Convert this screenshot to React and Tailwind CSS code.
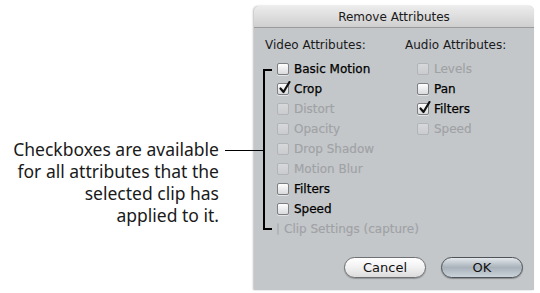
import { Fragment } from "react"

// attribute lists
const VIDEO_ATTRIBUTES = [
    { label: "Basic Motion", enabled: true, checked: false },
    { label: "Crop", enabled: true, checked: true },
    { label: "Distort", enabled: false },
    { label: "Opacity", enabled: false },
    { label: "Drop Shadow", enabled: false },
    { label: "Motion Blur", enabled: false },
    { label: "Filters", enabled: true, checked: false },
    { label: "Speed", enabled: true, checked: false },
    { label: "Clip Settings (capture)", enabled: false },
]

const AUDIO_ATTRIBUTES = [
    { label: "Levels", enabled: false },
    { label: "Pan", enabled: true, checked: false },
    { label: "Filters", enabled: true, checked: true },
    { label: "Speed", enabled: false },
]

const Checkbox = ({ enabled, checked }) => {
    return (
        <div
            className={
                enabled
                    ? "relative w-[12px] h-[12px] rounded-[2px] border border-[#7d7f82] bg-gradient-to-b from-white to-[#d9dadc] shadow-[0_1px_0_rgba(255,255,255,0.5)]"
                    : "relative w-[12px] h-[12px] rounded-[2px] border border-[#b2b5b8] bg-gradient-to-b from-[#d6d8da] to-[#c9cbce]"
            }
        >
            {checked && (
                <svg className="absolute left-[1px] top-[-3px]" width="12" height="13" viewBox="0 0 12 13">
                    <path d="M1.5 7.5 L4.5 11 L10.5 1" fill="none" stroke="#111" strokeWidth="2.2" strokeLinecap="round" strokeLinejoin="round" />
                </svg>
            )}
        </div>
    )
}

const AttributeRow = ({ item }) => {
    return (
        <div className="h-[20px] flex items-center gap-[5px] pl-[12px]">
            <Checkbox enabled={item.enabled} checked={item.checked} />
            <span className={item.enabled ? "text-[12px] text-black whitespace-nowrap [-webkit-text-stroke:0.25px_black]" : "text-[12px] text-[#9fa2a5] whitespace-nowrap [-webkit-text-stroke:0.15px_#9fa2a5]"}>
                {item.label}
            </span>
        </div>
    )
}

const App = () => {
    return (
        <div className="relative w-[540px] h-[293px] bg-white flex overflow-hidden">
            {/* callout text */}
            <div className="w-[254px] pt-[138px] pr-[35px] text-right text-[17.5px] leading-[22px] text-[#1a1a1a]" style={{ fontFamily: '"Noto Sans", "Open Sans", sans-serif' }}>
                <p className="whitespace-nowrap">Checkboxes are available</p>
                <p className="whitespace-nowrap">for all attributes that the</p>
                <p className="whitespace-nowrap">selected clip has</p>
                <p className="whitespace-nowrap">applied to it.</p>
            </div>

            {/* dialog */}
            <div
                className="mt-[6px] w-[280px] h-[284px] flex flex-col bg-[#c4c7ca] rounded-t-[5px] shadow-[-1px_0_2px_rgba(0,0,0,0.25)]"
                style={{ fontFamily: '"DejaVu Sans", Verdana, sans-serif' }}
            >
                {/* title bar */}
                <div className="h-[22px] flex items-center justify-center rounded-t-[5px] bg-gradient-to-b from-[#ececec] to-[#cfcfcf] border-b border-[#9b9b9b] text-[12px] text-[#1a1a1a]">
                    Remove Attributes
                </div>

                {/* body */}
                <div className="flex pt-[7px] pl-[11px]">
                    <div className="w-[140px] flex flex-col">
                        <div className="h-[20px] flex items-center text-[12px] text-[#1a1a1a] mb-[4px]">Video Attributes:</div>
                        {VIDEO_ATTRIBUTES.map((item) => (
                            <AttributeRow key={item.label} item={item} />
                        ))}
                    </div>
                    <div className="flex flex-col">
                        <div className="h-[20px] flex items-center text-[12px] text-[#1a1a1a] mb-[4px]">Audio Attributes:</div>
                        {AUDIO_ATTRIBUTES.map((item) => (
                            <AttributeRow key={item.label} item={item} />
                        ))}
                    </div>
                </div>

                {/* buttons */}
                <div className="flex justify-end gap-[15px] pr-[11px] mt-[18px]">
                    <button className="w-[82px] h-[21px] rounded-full border border-[#6e7073] bg-gradient-to-b from-white via-[#f1f1f1] to-[#dcdcdc] text-[13px] text-[#111] shadow-[0_1px_1px_rgba(0,0,0,0.25)]">
                        Cancel
                    </button>
                    <button className="w-[82px] h-[21px] rounded-full border border-[#4f5357] bg-gradient-to-b from-[#e3e8ec] via-[#a9b2ba] to-[#cbd3da] text-[13px] text-[#111] shadow-[0_1px_1px_rgba(0,0,0,0.3)]">
                        OK
                    </button>
                </div>
            </div>

            {/* callout bracket */}
            <div className="absolute left-[263px] top-[69px] w-[2px] h-[161px] bg-black" />
            <div className="absolute left-[263px] top-[69px] w-[9px] h-[2px] bg-black" />
            <div className="absolute left-[263px] top-[228px] w-[9px] h-[2px] bg-black" />
            <div className="absolute left-[225px] top-[150px] w-[39px] h-[1px] bg-black" />
        </div>
    )
}

export default App
